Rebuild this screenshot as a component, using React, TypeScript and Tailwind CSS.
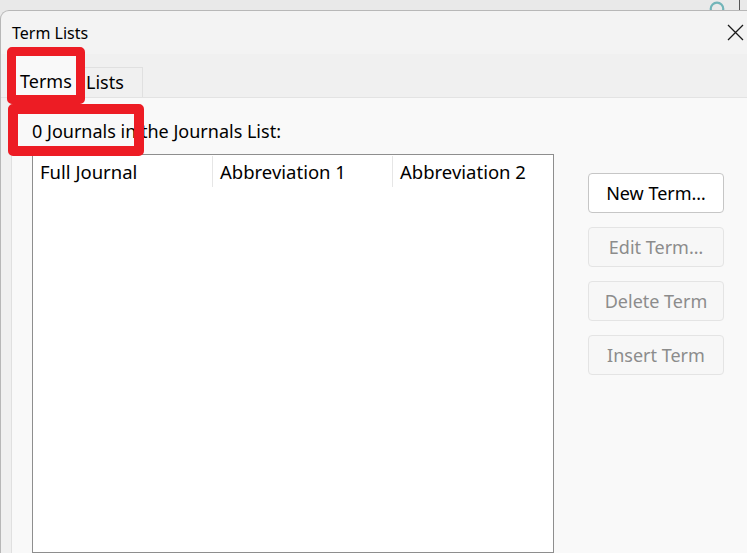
const font = { fontFamily: '"Noto Sans", "Open Sans", Arial, sans-serif' };

const columns = ['Full Journal', 'Abbreviation 1', 'Abbreviation 2'];

const buttons = [
  { label: 'New Term…', enabled: true },
  { label: 'Edit Term…', enabled: false },
  { label: 'Delete Term', enabled: false },
  { label: 'Insert Term', enabled: false },
];

export default function App() {
  return (
    <div
      className="relative w-[747px] h-[553px] overflow-hidden bg-[#e9e9e9] flex flex-col text-black"
      style={font}
    >
      {/* desktop strip behind the dialog */}
      <div className="relative h-[10px] shrink-0">
        <svg className="absolute left-[708px] top-0" width="18" height="18" viewBox="0 0 18 18">
          <circle cx="9" cy="9" r="6.3" fill="none" stroke="#72b5b9" strokeWidth="2.2" />
        </svg>
        <div className="absolute left-[739px] top-0 h-[10px] w-px bg-[#555]" />
      </div>

      {/* dialog */}
      <div className="relative flex-1 flex flex-col rounded-tl-[9px] border-t border-l border-[#b7b7b7] bg-[#f3f3f3] overflow-hidden">
        <div className="h-[43px] shrink-0 flex items-center justify-between pl-[11px] pr-[3px]">
          <span className="text-[16px] leading-none">Term Lists</span>
          <svg width="17" height="17" viewBox="0 0 17 17">
            <path d="M1 1 L16 16 M16 1 L1 16" stroke="#1a1a1a" strokeWidth="1.3" fill="none" />
          </svg>
        </div>

        {/* tab strip */}
        <div className="h-[44px] shrink-0 bg-[#f0f0f0] border-b border-[#e3e3e3] flex items-end pl-[7px]">
          <div className="h-[42px] w-[70px] -mb-px bg-[#f9f9f9] flex items-center pl-[12px] pt-[8px] text-[18px]">
            Terms
          </div>
          <div className="h-[30px] w-[65px] border-t border-r border-[#e0e0e0] flex items-center pl-[8px] text-[18px]">
            Lists
          </div>
        </div>

        {/* tab page */}
        <div className="flex-1 flex bg-[#f0f0f0]">
          <div className="flex-1 ml-[10px] border-l border-[#e0e0e0] bg-[#f9f9f9] flex pl-[20px]">
            <div className="flex flex-col">
              <div className="mt-[21px] h-[25px] leading-[25px] text-[18px]">
                0 Journals in the Journals List:
              </div>
              <div className="mt-[10px] w-[522px] flex-1 border border-[#8e8e8e] bg-white overflow-hidden">
                <div className="flex h-[31px] mt-px">
                  {columns.map((c, i) => (
                    <div
                      key={c}
                      className={`w-[180px] shrink-0 pl-[7px] flex items-center text-[18.5px] ${i < 2 ? 'border-r border-[#e6e6e6]' : ''}`}
                    >
                      {c}
                    </div>
                  ))}
                </div>
              </div>
            </div>

            <div className="ml-[34px] mt-[75px] flex flex-col gap-[14px]">
              {buttons.map((b) => (
                <div
                  key={b.label}
                  className={`w-[136px] h-[40px] rounded-[4px] flex items-center justify-center text-[18px] ${
                    b.enabled
                      ? 'bg-white border border-[#c6c6c6] text-black'
                      : 'bg-[#f7f7f7] border border-[#e4e4e4] text-[#8c8c8c]'
                  }`}
                >
                  {b.label}
                </div>
              ))}
            </div>
          </div>
        </div>
      </div>

      {/* red annotation boxes */}
      <div className="absolute left-[7px] top-[47px] w-[78px] h-[57px] border-[9px] border-[#ed1c24] rounded-[5px]" />
      <div className="absolute left-[8px] top-[104px] w-[136px] h-[52px] border-[10px] border-[#ed1c24] rounded-[5px]" />
    </div>
  );
}
